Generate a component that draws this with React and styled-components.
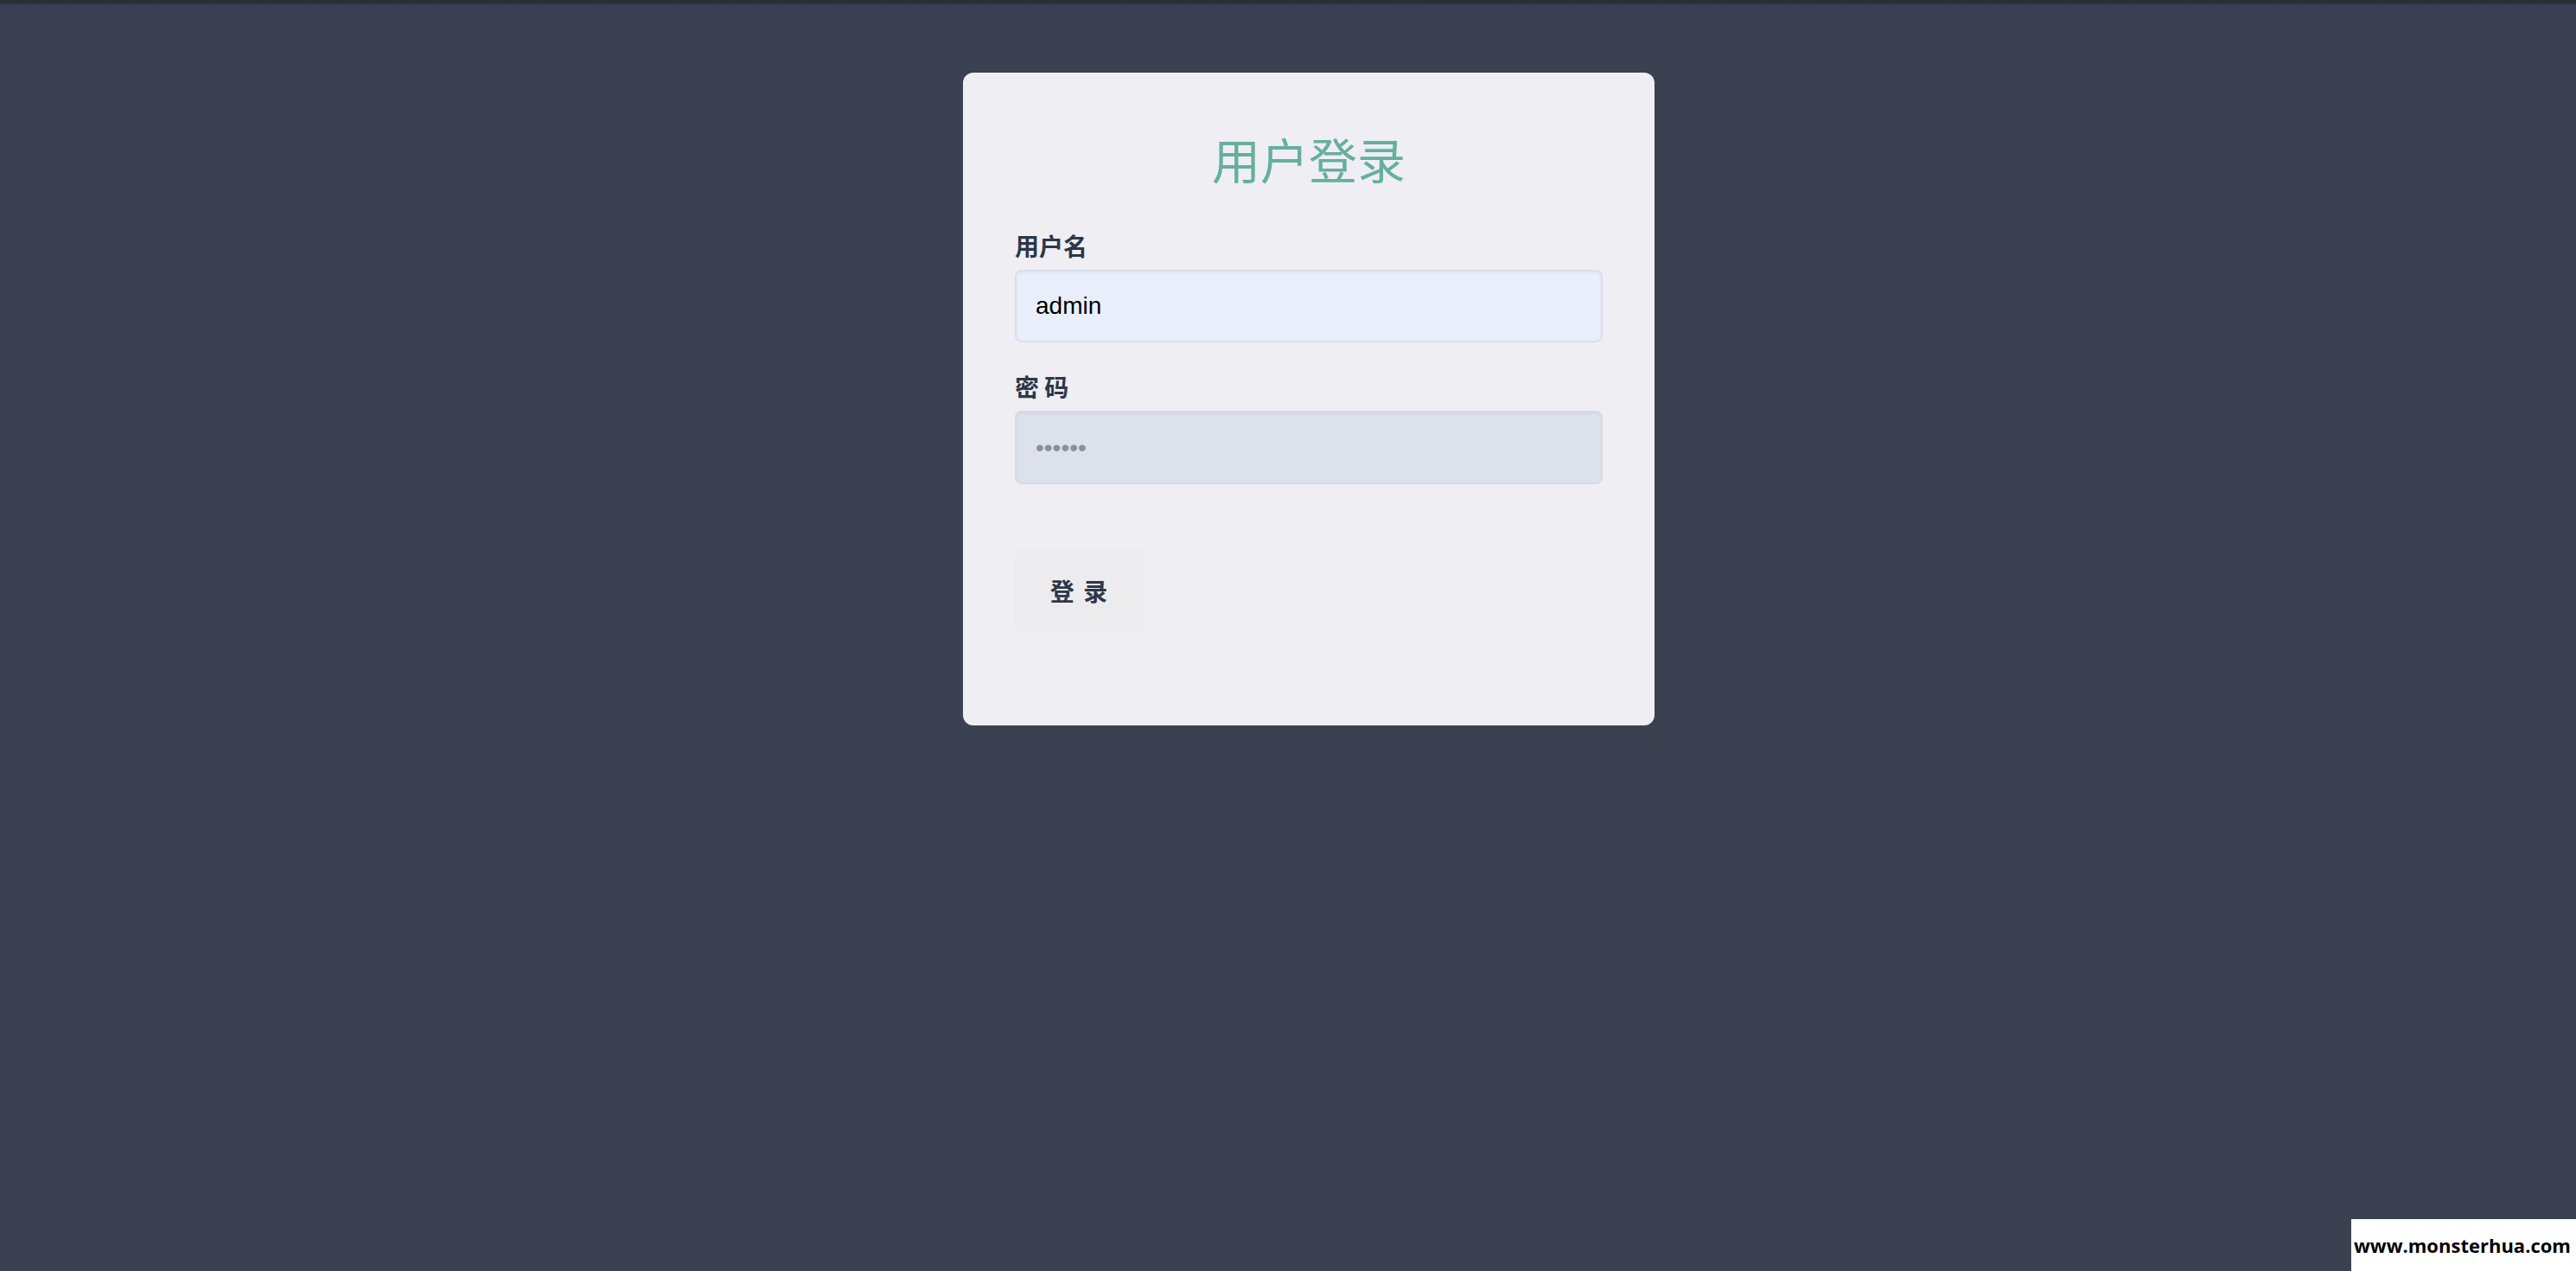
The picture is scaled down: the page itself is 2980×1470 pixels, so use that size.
import React from "react";
import styled, { createGlobalStyle } from "styled-components";

const GlobalStyle = createGlobalStyle`
  html, body {
    margin: 0;
    padding: 0;
  }
  body {
    background: #3b4150;
    font-family: "Noto Sans CJK SC", "Noto Sans", sans-serif;
  }
  * {
    box-sizing: border-box;
  }
`;

const Page = styled.div`
  min-height: 100vh;
  padding: 84px 0 0 48px;
  background: linear-gradient(#2c2f35 0, #2c2f35 4px, #34405a 5px, #3b4150 16px, #3b4150 100%);
`;

const Card = styled.form`
  width: 800px;
  margin: 0 auto;
  padding: 60px 60px 108px;
  background: #eeeef3;
  border-radius: 12px;
`;

const Title = styled.h1`
  margin: 0 0 42px;
  font-size: 56px;
  line-height: 78px;
  font-weight: 400;
  color: #66af9c;
  text-align: center;
`;

const Field = styled.div`
  margin-top: ${(p) => (p.first ? 0 : 31)}px;
`;

const Label = styled.label`
  display: block;
  margin-bottom: 8px;
  font-size: 28px;
  line-height: 40px;
  font-weight: 700;
  color: #2d3748;
  white-space: pre;
`;

const Input = styled.input`
  display: block;
  width: 100%;
  height: ${(p) => (p.filled ? 84 : 85)}px;
  padding: 0 22px;
  border: 2px solid ${(p) => (p.filled ? "#d9e0ec" : "#d5dae4")};
  border-radius: 8px;
  background: ${(p) => (p.filled ? "#e8effb" : "#dde1ea")};
  box-shadow: inset 0 2px 3px rgba(0, 0, 0, 0.04);
  font-family: "Liberation Sans", Arial, sans-serif;
  font-size: 28px;
  color: #000;
  outline: none;

  &::placeholder {
    color: #8a8f9c;
  }
`;

const Button = styled.button`
  display: block;
  width: 150px;
  height: 96px;
  margin-top: 75px;
  border: none;
  border-radius: 8px;
  background: #ececef;
  font-family: "Noto Sans CJK SC", sans-serif;
  font-size: 28px;
  font-weight: 700;
  color: #2d3748;
  letter-spacing: 2px;
  white-space: pre;
  cursor: pointer;
`;

const Watermark = styled.div`
  position: fixed;
  right: 0;
  bottom: 0;
  width: 260px;
  height: 60px;
  padding-left: 3px;
  display: flex;
  align-items: center;
  background: #fff;
  font-family: "Open Sans", sans-serif;
  font-size: 22px;
  font-weight: 700;
  color: #000;
  white-space: nowrap;
`;

export default function App() {
  return (
    <>
      <GlobalStyle />
      <Page>
        <Card onSubmit={(e) => e.preventDefault()}>
          <Title>用户登录</Title>
          <Field first>
            <Label htmlFor="username">用户名</Label>
            <Input id="username" filled defaultValue="admin" />
          </Field>
          <Field>
            <Label htmlFor="password">密 码</Label>
            <Input id="password" type="password" placeholder="••••••" />
          </Field>
          <Button type="submit">登 录</Button>
        </Card>
      </Page>
      <Watermark>www.monsterhua.com</Watermark>
    </>
  );
}
